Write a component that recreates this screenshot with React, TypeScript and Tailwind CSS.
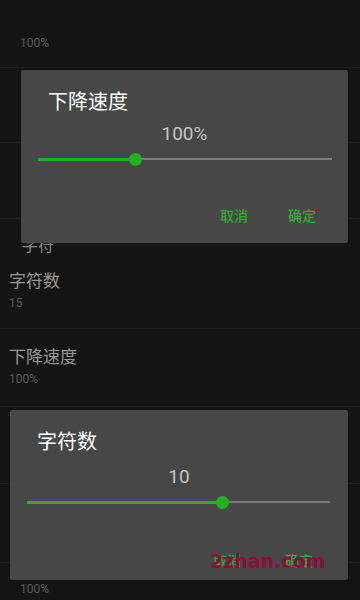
import React from "react";

const font = { fontFamily: "Roboto, 'Noto Sans CJK SC', sans-serif" };

function Slider({ pct }: { pct: number }) {
  return (
    <div className="relative h-[14px] flex items-center">
      <div className="h-[2px] w-full bg-[#7c7c7c]" />
      <div className="absolute left-0 h-[3px] bg-[#3aa63a]" style={{ width: `${pct}%` }} />
      <div
        className="absolute h-[13px] w-[13px] -ml-[6.5px] rounded-full bg-[#1fb41f]"
        style={{ left: `${pct}%` }}
      />
    </div>
  );
}

function SeekDialog({
  title,
  value,
  pct,
  className,
  valuePad,
  sliderPad,
  btnPad,
  gap,
}: {
  title: string;
  value: string;
  pct: number;
  className: string;
  valuePad: string;
  sliderPad: string;
  btnPad: string;
  gap: string;
}) {
  return (
    <div className={`absolute bg-[#474747] rounded-[2px] shadow-[0_0_2px_rgba(0,0,0,0.6)] ${className}`}>
      <div className="pl-[27px] pt-[19px] text-[20px] leading-[26px] text-white">{title}</div>
      <div className={`text-center text-[19px] leading-[26px] text-[#c4c4c4] ${valuePad}`}>{value}</div>
      <div className={`mt-[5px] ${sliderPad}`}>
        <Slider pct={pct} />
      </div>
      <div className={`flex justify-end ${gap} ${btnPad} text-[14px] leading-[20px] font-medium text-[#38a838]`}>
        <span>取消</span>
        <span>确定</span>
      </div>
    </div>
  );
}

export default function App() {
  return (
    <div className="relative w-[360px] h-[600px] overflow-hidden bg-[#141414]" style={font}>
      {/* background list */}
      <div className="flex flex-col">
        <div className="h-[68px] border-b border-[#1f1f1f] pl-[20px] pt-[35px] text-[12px] leading-[16px] text-[#5a5a5a]">
          100%
        </div>
        <div className="h-[75px] border-b border-[#1f1f1f]" />
        <div className="h-[76px] border-b border-[#1f1f1f]" />
        <div className="h-[110px] border-b border-[#1f1f1f]">
          <div className="pl-[22px] pt-[16px] text-[16px] leading-[22px] text-[#8a8a8a]">字符</div>
          <div className="pl-[9px] pt-[13px] text-[17px] leading-[22px] text-[#999999]">字符数</div>
          <div className="pl-[9px] pt-[3px] text-[12px] leading-[16px] text-[#5a5a5a]">15</div>
        </div>
        <div className="h-[78px] border-b border-[#1f1f1f]">
          <div className="pl-[9px] pt-[17px] text-[17px] leading-[22px] text-[#999999]">下降速度</div>
          <div className="pl-[9px] pt-[3px] text-[12px] leading-[16px] text-[#5a5a5a]">100%</div>
        </div>
        <div className="h-[77px] border-b border-[#1f1f1f]" />
        <div className="h-[79px] border-b border-[#1f1f1f]" />
        <div className="pl-[20px] pt-[18px] text-[12px] leading-[16px] text-[#5a5a5a]">100%</div>
      </div>

      <SeekDialog
        title="下降速度"
        value="100%"
        pct={33.3}
        className="left-[21px] top-[70px] w-[327px] h-[173px]"
        valuePad="mt-[6px]"
        sliderPad="pl-[17px] pr-[16px]"
        btnPad="pr-[32px] mt-[40px]"
        gap="gap-[40px]"
      />
      <SeekDialog
        title="字符数"
        value="10"
        pct={64.4}
        className="left-[10px] top-[410px] w-[338px] h-[170px]"
        valuePad="mt-[9px]"
        sliderPad="pl-[17px] pr-[18px]"
        btnPad="pr-[35px] mt-[42px]"
        gap="gap-[44px]"
      />

      {/* watermark */}
      <div
        className="absolute left-[210px] top-[549px] text-[19px] font-bold leading-[24px] text-[#8a0d3c]"
        style={{ fontFamily: "'DejaVu Sans', sans-serif" }}
      >
        2zhan.com
      </div>
    </div>
  );
}
